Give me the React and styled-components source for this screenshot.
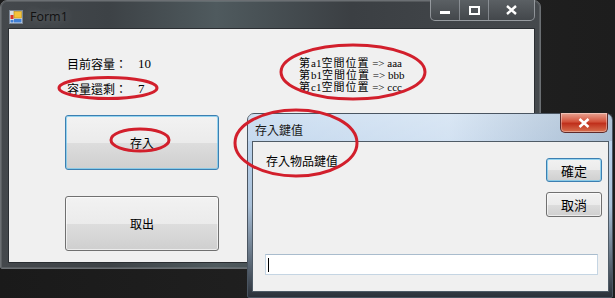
import React from "react";
import styled, { createGlobalStyle } from "styled-components";

const GlobalStyle = createGlobalStyle`
  html, body {
    margin: 0;
    padding: 0;
    background: #1c1c1c;
    overflow: hidden;
  }
`;

const cjk = `"Noto Sans CJK TC", "Noto Sans CJK SC", sans-serif`;

const Desktop = styled.div`
  position: relative;
  width: 615px;
  height: 298px;
  overflow: hidden;
  background: linear-gradient(90deg, #1a1a1a 0%, #222 60%, #1d1d1d 100%);
  font-family: ${cjk};
  font-size: 12px;
  color: #000;
`;

const Form1Window = styled.div`
  position: absolute;
  left: 0;
  top: 0;
  width: 541px;
  height: 269px;
  box-sizing: border-box;
  display: flex;
  flex-direction: column;
  padding: 0 5px 5px 7px;
  border: 1px solid #6b6f73;
  border-radius: 7px 7px 2px 2px;
  background: linear-gradient(
    90deg,
    #44484c 0%,
    #3d4246 20%,
    #4f5a5e 40%,
    #3b3f43 65%,
    #45494d 100%
  );
  box-shadow: inset 0 0 0 1px rgba(255, 255, 255, 0.12);
`;

const TitleBar = styled.div`
  height: 27px;
  display: flex;
  align-items: flex-start;
  flex-shrink: 0;
`;

const TitleLeft = styled.div`
  display: flex;
  align-items: center;
  gap: 7px;
  padding: 7px 0 0 1px;
  flex: 1;
`;

const TitleText = styled.span`
  font-family: "Open Sans", "Noto Sans", sans-serif;
  font-size: 12.5px;
  color: #111;
  text-shadow: 0 0 8px rgba(255, 255, 255, 0.35);
`;

const CaptionGroup = styled.div`
  display: flex;
  margin-top: -1px;
  border: 1px solid rgba(200, 205, 210, 0.55);
  border-top: none;
  border-radius: 0 0 5px 5px;
  overflow: hidden;
  height: 20px;
  background: linear-gradient(#5b6064, #43474b);
`;

const CaptionButton = styled.div`
  width: ${(p) => p.w}px;
  display: flex;
  align-items: center;
  justify-content: center;
  border-left: ${(p) => (p.first ? "none" : "1px solid rgba(200,205,210,0.45)")};
  color: #fff;
`;

const Client = styled.div`
  flex: 1;
  background: #f0f0f0;
  border: 1px solid #2a2e32;
  display: grid;
  grid-template-columns: 234px 1fr;
  align-items: start;
  padding: 22px 0 0 56px;
`;

const LeftCol = styled.div`
  display: flex;
  flex-direction: column;
`;

const InfoRow = styled.div`
  display: flex;
  height: 25px;
  align-items: center;
  padding-left: 2px;
  line-height: 1;
`;

const InfoLabel = styled.span`
  width: 71px;
`;

const Value = styled.span`
  font-family: "Liberation Serif", serif;
  font-size: 13px;
`;

const WinButton = styled.div`
  box-sizing: border-box;
  width: ${(p) => p.w}px;
  height: ${(p) => p.h}px;
  margin-top: ${(p) => p.mt || 0}px;
  display: flex;
  align-items: center;
  justify-content: center;
  border-radius: 3px;
  border: 1px solid ${(p) => (p.focused ? "#3c7fb1" : "#707070")};
  background: linear-gradient(
    #f2f2f2 0%,
    #ebebeb 50%,
    #dddddd 51%,
    #cfcfcf 100%
  );
  box-shadow: inset 0 0 0 1px
    ${(p) => (p.focused ? "rgba(110, 200, 240, 0.7)" : "rgba(255,255,255,0.6)")};
  font-size: ${(p) => p.fs || 12}px;
`;

const SlotList = styled.div`
  margin-top: 6px;
  font-family: "Liberation Serif", "Noto Sans CJK TC", serif;
  font-size: 11px;
  line-height: 12px;
`;

const SlotLine = styled.div`
  height: 12px;
  white-space: nowrap;
`;

const Han = styled.span`
  letter-spacing: 1px;
`;

const Dialog = styled.div`
  position: absolute;
  left: 247px;
  top: 113px;
  width: 366px;
  height: 185px;
  box-sizing: border-box;
  display: flex;
  flex-direction: column;
  padding: 0 3px 5px 4px;
  border: 1px solid #4a5561;
  border-radius: 7px 7px 2px 2px;
  background: linear-gradient(
    180deg,
    #c6daef 0%,
    #b8d0ea 20%,
    #a9c0d8 50%,
    #6d7c8c 75%,
    #2b3139 100%
  );
`;

const DialogTitleBar = styled.div`
  height: 27px;
  display: flex;
  align-items: flex-start;
  justify-content: space-between;
  flex-shrink: 0;
  background: linear-gradient(90deg, rgba(255, 255, 255, 0.15), rgba(255, 255, 255, 0.35) 55%, rgba(90, 100, 110, 0.2));
  margin: 0 -3px 0 -4px;
  padding: 0 4px 0 7px;
`;

const DialogTitle = styled.span`
  padding-top: 7px;
  color: #1a1a1a;
`;

const CloseButton = styled.div`
  width: 46px;
  height: 19px;
  margin-top: -1px;
  display: flex;
  align-items: center;
  justify-content: center;
  border: 1px solid #5e2a2a;
  border-top: none;
  border-radius: 0 0 5px 5px;
  background: linear-gradient(#e8a493 0%, #d3533c 45%, #c0301c 55%, #d7704f 100%);
  box-shadow: inset 0 0 0 1px rgba(255, 255, 255, 0.35);
`;

const DialogClient = styled.div`
  flex: 1;
  background: #f0f0f0;
  border: 1px solid #4f5b66;
  display: flex;
  flex-direction: column;
  padding: 12px 6px 16px 12px;
`;

const DialogTop = styled.div`
  display: flex;
  justify-content: space-between;
`;

const PromptText = styled.span`
  padding-left: 1px;
  line-height: 14px;
`;

const ButtonStack = styled.div`
  display: flex;
  flex-direction: column;
  gap: 10px;
  margin-top: 4px;
`;

const TextBox = styled.div`
  margin-top: auto;
  margin-right: 4px;
  height: 21px;
  box-sizing: border-box;
  background: #fff;
  border: 1px solid #c5d5e3;
  border-top-color: #a9bccd;
  display: flex;
  align-items: center;
  padding-left: 2px;
`;

const Caret = styled.div`
  width: 1px;
  height: 14px;
  background: #000;
`;

const Annotations = styled.svg`
  position: absolute;
  left: 0;
  top: 0;
  pointer-events: none;
`;

const FormIcon = () => (
  <svg width="14" height="14" viewBox="0 0 14 14">
    <rect x="0.5" y="0.5" width="13" height="13" fill="#d8dde3" stroke="#7a8694" />
    <rect x="5" y="1.5" width="7.5" height="6.5" fill="#f4c23b" stroke="#b88a10" strokeWidth="0.6" />
    <rect x="1.5" y="5" width="3" height="4" fill="#d9342b" />
    <rect x="5" y="9" width="7.5" height="3.5" fill="#3f7fd6" />
    <rect x="1.5" y="10" width="3" height="2.5" fill="#3f7fd6" />
  </svg>
);

const slots = [
  ["a1", "aaa"],
  ["b1", "bbb"],
  ["c1", "ccc"],
];

export default function App() {
  return (
    <>
      <GlobalStyle />
      <Desktop>
        <Form1Window>
          <TitleBar>
            <TitleLeft>
              <FormIcon />
              <TitleText>Form1</TitleText>
            </TitleLeft>
            <CaptionGroup>
              <CaptionButton w={28} first>
                <svg width="10" height="10" viewBox="0 0 10 10">
                  <rect x="0" y="6" width="10" height="3" fill="#fff" />
                </svg>
              </CaptionButton>
              <CaptionButton w={28}>
                <svg width="11" height="9" viewBox="0 0 11 9">
                  <rect x="1" y="1" width="9" height="7" fill="none" stroke="#fff" strokeWidth="2" />
                </svg>
              </CaptionButton>
              <CaptionButton w={45}>
                <svg width="11" height="10" viewBox="0 0 11 10">
                  <path d="M1 1 L10 9 M10 1 L1 9" stroke="#fff" strokeWidth="2.4" />
                </svg>
              </CaptionButton>
            </CaptionGroup>
          </TitleBar>
          <Client>
            <LeftCol>
              <InfoRow>
                <InfoLabel>目前容量：</InfoLabel>
                <Value>10</Value>
              </InfoRow>
              <InfoRow>
                <InfoLabel>容量還剩：</InfoLabel>
                <Value>7</Value>
              </InfoRow>
              <WinButton w={154} h={55} mt={14} focused>
                存入
              </WinButton>
              <WinButton w={154} h={55} mt={26}>
                取出
              </WinButton>
            </LeftCol>
            <SlotList>
              {slots.map(([id, key]) => (
                <SlotLine key={id}>
                  <Han>第</Han>
                  {id}
                  <Han>空間位置</Han> =&gt; {key}
                </SlotLine>
              ))}
            </SlotList>
          </Client>
        </Form1Window>

        <Dialog>
          <DialogTitleBar>
            <DialogTitle>存入鍵值</DialogTitle>
            <CloseButton>
              <svg width="12" height="10" viewBox="0 0 12 10">
                <path d="M1.5 1 L10.5 9 M10.5 1 L1.5 9" stroke="#fff" strokeWidth="2.6" />
              </svg>
            </CloseButton>
          </DialogTitleBar>
          <DialogClient>
            <DialogTop>
              <PromptText>存入物品鍵值</PromptText>
              <ButtonStack>
                <WinButton w={56} h={24} focused fs={13}>
                  確定
                </WinButton>
                <WinButton w={56} h={25} fs={13}>
                  取消
                </WinButton>
              </ButtonStack>
            </DialogTop>
            <TextBox>
              <Caret />
            </TextBox>
          </DialogClient>
        </Dialog>

        <Annotations width="615" height="298" viewBox="0 0 615 298">
          <g fill="none" stroke="#d21f2c" strokeWidth="3">
            <ellipse cx="108" cy="88" rx="49" ry="10.5" />
            <ellipse cx="353" cy="72" rx="72" ry="27" />
            <ellipse cx="140" cy="140" rx="29" ry="11" />
            <ellipse cx="296" cy="143" rx="61" ry="33" />
          </g>
        </Annotations>
      </Desktop>
    </>
  );
}
